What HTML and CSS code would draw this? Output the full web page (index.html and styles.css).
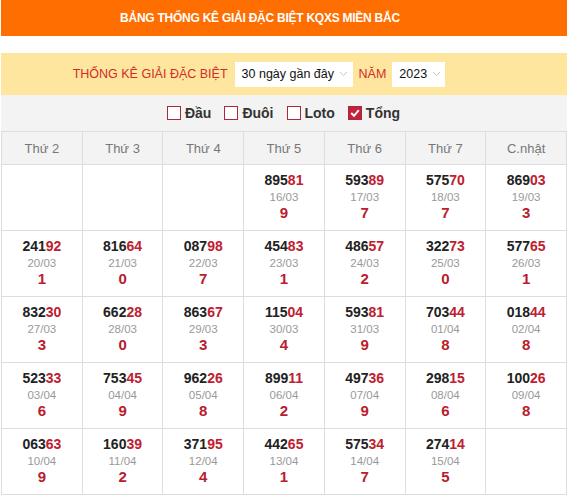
FILE: index.html
```html
<!DOCTYPE html>
<html lang="vi">
<head>
<meta charset="utf-8">
<title>Bảng thống kê giải đặc biệt</title>
<link rel="stylesheet" href="styles.css">
</head>
<body>
<div class="wrap">
  <div class="title">BẢNG THỐNG KÊ GIẢI ĐẶC BIỆT KQXS MIỀN BẮC</div>
  <div class="filter">
    <span class="flabel">THỐNG KÊ GIẢI ĐẶC BIỆT</span>
    <span class="select sel-days">30 ngày gần đây<svg class="chev" width="9" height="6" viewBox="0 0 9 6"><path d="M1 1l3.5 3.5L8 1" fill="none" stroke="#c8c8c8" stroke-width="1"/></svg></span>
    <span class="flabel">NĂM</span>
    <span class="select sel-year">2023<svg class="chev" width="9" height="6" viewBox="0 0 9 6"><path d="M1 1l3.5 3.5L8 1" fill="none" stroke="#c8c8c8" stroke-width="1"/></svg></span>
  </div>
  <div class="checks">
    <label class="chk"><span class="box"></span>Đầu</label>
    <label class="chk"><span class="box"></span>Đuôi</label>
    <label class="chk"><span class="box"></span>Loto</label>
    <label class="chk"><span class="box on"><svg width="12" height="12" viewBox="0 0 12 12"><path d="M2.2 6l2.8 2.8L9.8 3.2" fill="none" stroke="#fff" stroke-width="2"/></svg></span>Tổng</label>
  </div>
  <table class="grid">
    <thead>
      <tr><th>Thứ 2</th><th>Thứ 3</th><th>Thứ 4</th><th>Thứ 5</th><th>Thứ 6</th><th>Thứ 7</th><th>C.nhật</th></tr>
    </thead>
    <tbody>
      <tr>
        <td></td><td></td><td></td>
        <td><div class="num">895<b>81</b></div><div class="date">16/03</div><div class="sum">9</div></td>
        <td><div class="num">593<b>89</b></div><div class="date">17/03</div><div class="sum">7</div></td>
        <td><div class="num">575<b>70</b></div><div class="date">18/03</div><div class="sum">7</div></td>
        <td><div class="num">869<b>03</b></div><div class="date">19/03</div><div class="sum">3</div></td>
      </tr>
      <tr>
        <td><div class="num">241<b>92</b></div><div class="date">20/03</div><div class="sum">1</div></td>
        <td><div class="num">816<b>64</b></div><div class="date">21/03</div><div class="sum">0</div></td>
        <td><div class="num">087<b>98</b></div><div class="date">22/03</div><div class="sum">7</div></td>
        <td><div class="num">454<b>83</b></div><div class="date">23/03</div><div class="sum">1</div></td>
        <td><div class="num">486<b>57</b></div><div class="date">24/03</div><div class="sum">2</div></td>
        <td><div class="num">322<b>73</b></div><div class="date">25/03</div><div class="sum">0</div></td>
        <td><div class="num">577<b>65</b></div><div class="date">26/03</div><div class="sum">1</div></td>
      </tr>
      <tr>
        <td><div class="num">832<b>30</b></div><div class="date">27/03</div><div class="sum">3</div></td>
        <td><div class="num">662<b>28</b></div><div class="date">28/03</div><div class="sum">0</div></td>
        <td><div class="num">863<b>67</b></div><div class="date">29/03</div><div class="sum">3</div></td>
        <td><div class="num">115<b>04</b></div><div class="date">30/03</div><div class="sum">4</div></td>
        <td><div class="num">593<b>81</b></div><div class="date">31/03</div><div class="sum">9</div></td>
        <td><div class="num">703<b>44</b></div><div class="date">01/04</div><div class="sum">8</div></td>
        <td><div class="num">018<b>44</b></div><div class="date">02/04</div><div class="sum">8</div></td>
      </tr>
      <tr>
        <td><div class="num">523<b>33</b></div><div class="date">03/04</div><div class="sum">6</div></td>
        <td><div class="num">753<b>45</b></div><div class="date">04/04</div><div class="sum">9</div></td>
        <td><div class="num">962<b>26</b></div><div class="date">05/04</div><div class="sum">8</div></td>
        <td><div class="num">899<b>11</b></div><div class="date">06/04</div><div class="sum">2</div></td>
        <td><div class="num">497<b>36</b></div><div class="date">07/04</div><div class="sum">9</div></td>
        <td><div class="num">298<b>15</b></div><div class="date">08/04</div><div class="sum">6</div></td>
        <td><div class="num">100<b>26</b></div><div class="date">09/04</div><div class="sum">8</div></td>
      </tr>
      <tr>
        <td><div class="num">063<b>63</b></div><div class="date">10/04</div><div class="sum">9</div></td>
        <td><div class="num">160<b>39</b></div><div class="date">11/04</div><div class="sum">2</div></td>
        <td><div class="num">371<b>95</b></div><div class="date">12/04</div><div class="sum">4</div></td>
        <td><div class="num">442<b>65</b></div><div class="date">13/04</div><div class="sum">1</div></td>
        <td><div class="num">575<b>34</b></div><div class="date">14/04</div><div class="sum">7</div></td>
        <td><div class="num">274<b>14</b></div><div class="date">15/04</div><div class="sum">5</div></td>
        <td></td>
      </tr>
    </tbody>
  </table>
</div>
</body>
</html>
```

FILE: styles.css
```css
html, body {
  margin: 0;
  padding: 0;
  background: #fff;
}
body {
  font-family: "Liberation Sans", Arial, sans-serif;
  color: #222;
}
.wrap {
  width: 566px;
  margin-left: 1px;
}
.title {
  background: #ff6e00;
  color: #fff;
  font-weight: bold;
  font-size: 12px;
  letter-spacing: -0.25px;
  height: 36px;
  line-height: 36px;
  text-align: center;
  padding-right: 48px;
}
.filter {
  margin-top: 17px;
  background: #ffe69e;
  height: 42px;
  display: flex;
  align-items: center;
  justify-content: center;
  padding-right: 50px;
  gap: 6px;
}
.flabel {
  color: #d42a2a;
  font-size: 12.5px;
}
.select {
  background: #fff;
  height: 25px;
  display: inline-flex;
  align-items: center;
  font-size: 12.5px;
  color: #111;
  padding-left: 7px;
  box-sizing: border-box;
  white-space: nowrap;
}
.sel-days { width: 118px; margin-left: 1px; }
.sel-year { width: 53px; }
.chev { margin-left: 5px; flex: none; }
.checks {
  background: #f3f3f3;
  height: 36px;
  display: flex;
  align-items: center;
  justify-content: center;
  gap: 13px;
  padding-right: 1px;
}
.chk {
  display: inline-flex;
  align-items: center;
  font-size: 14px;
  font-weight: bold;
  color: #333;
}
.box {
  width: 12px;
  height: 12px;
  border: 1px solid #a8283c;
  margin-right: 4px;
  background: #fff;
  box-sizing: content-box;
  display: inline-block;
}
.box.on {
  background: #c4213a;
}
.box svg { display: block; }
.grid {
  width: 566px;
  border-collapse: collapse;
  table-layout: fixed;
}
.grid th {
  background: #f3f3f3;
  color: #777;
  font-weight: normal;
  font-size: 13px;
  height: 32px;
  border: 1px solid #ddd;
  padding: 0;
}
.grid td {
  border: 1px solid #ddd;
  height: 66px;
  vertical-align: top;
  text-align: center;
  padding: 7px 0 0;
  box-sizing: border-box;
}
.num {
  font-size: 14px;
  font-weight: bold;
  color: #222;
  line-height: 16px;
}
.num b { color: #c0202e; }
.date {
  font-size: 11.5px;
  color: #999;
  line-height: 16px;
  margin-top: 1px;
}
.sum {
  font-size: 15px;
  font-weight: bold;
  color: #b8202e;
  line-height: 16px;
}
```
